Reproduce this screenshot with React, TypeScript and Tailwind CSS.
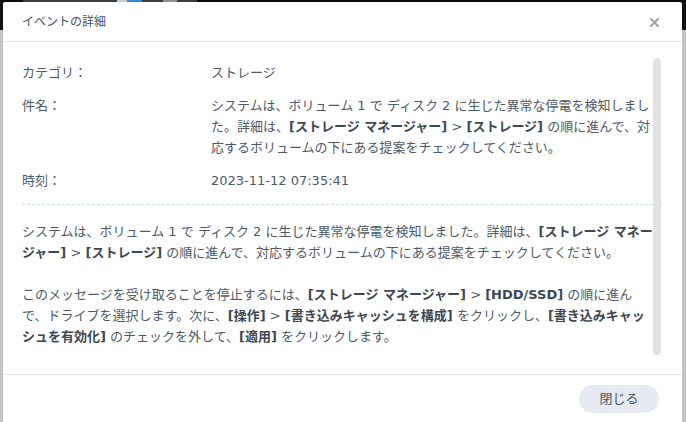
import React from "react";

const B = ({ children }: { children: React.ReactNode }) => (
  <span className="font-bold text-[#3e4854]">{children}</span>
);

export default function App() {
  return (
    <div className="relative w-[686px] h-[422px] overflow-hidden bg-[#c4c4c4] font-['DejaVu_Sans','Noto_Sans_CJK_JP',sans-serif]">
      {/* desktop background */}
      <div className="flex flex-col h-full">
        <div className="h-[30px] bg-[#111214] flex items-start">
          <div className="flex h-[2px] w-full">
            <div className="w-[23px] bg-[#0c0c0c]" />
            <div className="w-[94px] bg-[#3a3d42]" />
            <div className="w-[10px] bg-[#c3cad6]" />
            <div className="w-[15px] bg-[#2f8ad6]" />
            <div className="w-[21px] bg-[#3a3e44]" />
            <div className="w-[14px] bg-[#8e9092]" />
            <div className="w-[20px] bg-[#3a3e44]" />
            <div className="flex-1 bg-[#0a0a0a]" />
          </div>
        </div>
        <div className="flex-1 bg-[#c4c4c4]" />
      </div>

      {/* dialog window */}
      <div className="absolute left-[3px] top-[2px] w-[679px] h-[420px] bg-white flex flex-col rounded-t-[2px]">
        {/* header */}
        <div className="h-[40px] shrink-0 border-b border-[#e3e8ee] flex items-center justify-between pl-[19px] pr-[23px]">
          <span className="text-[12px] text-[#465260] leading-none">イベントの詳細</span>
          <svg width="9" height="9" viewBox="0 0 9 9" className="mt-[1px]">
            <path d="M1 1 L8 8 M8 1 L1 8" stroke="#9ea3a8" strokeWidth="2" strokeLinecap="square" />
          </svg>
        </div>

        {/* body */}
        <div className="relative flex-1 px-[19px] pt-[20px] text-[13px] leading-[21px] text-[#4e5a66]">
          <div className="flex flex-col gap-[12px]">
            <div className="flex">
              <div className="w-[189px] shrink-0">カテゴリ：</div>
              <div className="flex-1">ストレージ</div>
            </div>
            <div className="flex">
              <div className="w-[189px] shrink-0">件名：</div>
              <div className="flex-1 pr-[2px]">
                システムは、ボリューム 1 で ディスク 2 に生じた異常な停電を検知しまし
                <br />
                た。詳細は、<B>[ストレージ マネージャー]</B> &gt; <B>[ストレージ]</B> の順に進んで、対
                <br />
                応するボリュームの下にある提案をチェックしてください。
              </div>
            </div>
            <div className="flex">
              <div className="w-[189px] shrink-0">時刻：</div>
              <div className="flex-1">2023-11-12 07:35:41</div>
            </div>
          </div>

          <div className="mt-[13px] border-t border-dashed border-[#d3dde8]" />

          <div className="mt-[16px] flex flex-col gap-[21px]">
            <p>
              システムは、ボリューム 1 で ディスク 2 に生じた異常な停電を検知しました。詳細は、<B>[ストレージ マネー</B>
              <br />
              <B>ジャー]</B> &gt; <B>[ストレージ]</B> の順に進んで、対応するボリュームの下にある提案をチェックしてください。
            </p>
            <p>
              このメッセージを受け取ることを停止するには、<B>[ストレージ マネージャー]</B> &gt; <B>[HDD/SSD]</B> の順に進ん
              <br />
              で、ドライブを選択します。次に、<B>[操作]</B> &gt; <B>[書き込みキャッシュを構成]</B> をクリックし、<B>[書き込みキャッ</B>
              <br />
              <B>シュを有効化]</B> のチェックを外して、<B>[適用]</B> をクリックします。
            </p>
          </div>

          {/* scrollbar thumb */}
          <div className="absolute left-[650px] top-[16px] bottom-[19px] w-[8px] rounded-full bg-[#e2e2e2]" />
        </div>

        {/* footer */}
        <div className="h-[48px] shrink-0 border-t border-[#dfe6ee] flex items-center justify-end pr-[23px]">
          <button className="w-[80px] h-[28px] rounded-full bg-[#e6ebf3] text-[13px] text-[#4a5563] leading-none">
            閉じる
          </button>
        </div>
      </div>
    </div>
  );
}
